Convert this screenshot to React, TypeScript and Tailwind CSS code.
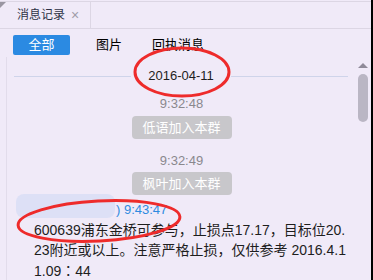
import React from "react";

const font = { fontFamily: '"Liberation Sans", "Noto Sans CJK SC", sans-serif' };

function SystemNote({ time, text, gap }: { time: string; text: string; gap: string }) {
  return (
    <div className="flex flex-col items-center">
      <div className="text-[13px] leading-[16px] text-[#8a888e]">{time}</div>
      <div
        className={`${gap} w-[100px] h-[23px] rounded-[4px] bg-[#c8c7cb] text-white text-[13px] flex items-center justify-center`}
      >
        {text}
      </div>
    </div>
  );
}

export default function App() {
  return (
    <div
      lang="zh-CN"
      className="relative w-[373px] h-[280px] overflow-hidden bg-[#f0eaf8] border-r-2 border-black"
      style={font}
    >
      {/* Tab strip */}
      <div className="mt-[1px] h-[28px] border-t border-b border-[#dcd6e4] flex">
        <div className="relative w-[91px] border-r border-[#dcd6e4] flex items-center pl-[17px] gap-[6px]">
          <svg className="absolute left-0 top-0" width="7" height="7" viewBox="0 0 7 7">
            <path d="M0 0 H6 L0 6 Z" fill="#9a96a2" />
          </svg>
          <span className="text-[12px] text-[#2e3345]">消息记录</span>
          <span className="text-[14px] leading-none text-[#a09ca8]">×</span>
        </div>
      </div>

      {/* Filters */}
      <div className="flex items-center h-[20px] mt-[6px] pl-[13px] text-[13px] text-black">
        <div className="w-[57px] h-[20px] rounded-[2px] bg-[#2b8ae2] text-white flex items-center justify-center">
          全部
        </div>
        <span className="ml-[26px]">图片</span>
        <span className="ml-[30px]">回执消息</span>
      </div>

      <div className="flex">
        {/* Message list */}
        <div className="flex-1 border-l border-[#e2dceb] ml-[6px] mt-[2px]">
          <div className="flex items-center mt-[11px] pl-[7px] pr-[8px]">
            <div className="flex-1 h-px bg-[#cfd4ea]" />
            <span className="px-[17px] text-[13px] leading-[16px] text-[#1e1e1e]">2016-04-11</span>
            <div className="flex-1 h-px bg-[#cfd4ea]" />
          </div>
          <div className="mt-[12px]">
            <SystemNote time="9:32:48" text="低语加入本群" gap="mt-[4px]" />
          </div>
          <div className="mt-[14px]">
            <SystemNote time="9:32:49" text="枫叶加入本群" gap="mt-[3px]" />
          </div>
          <div className="flex items-end -mt-[1px] pl-[9px]">
            <div className="w-[99px] h-[24px] rounded-[8px] bg-[#dde0f6]" />
            <span className="text-[13px] leading-[16px] text-[#2f8ae0] ml-[1px]">) 9:43:47</span>
          </div>
          <div className="pl-[27px] mt-[2px] text-[14px] leading-[20px] text-[#1e1e1e] whitespace-nowrap">
            <div>600639浦东金桥可参与，止损点17.17，目标位20.</div>
            <div>23附近或以上。注意严格止损，仅供参考 2016.4.1</div>
            <div>
              1.09<span className="font-['Noto_Sans_CJK_TC']">：</span>44
            </div>
          </div>
        </div>

        {/* Scrollbar */}
        <div className="w-[15px] flex flex-col items-center pr-[2px] mt-[2px]">
          <svg className="mt-[6px]" width="10" height="5" viewBox="0 0 10 5">
            <path d="M5 0 L10 5 H0 Z" fill="#8f8a99" />
          </svg>
          <div className="mt-[6px] w-[10px] h-[48px] rounded-full bg-[#bab6c4]" />
        </div>
      </div>

      {/* Hand-drawn annotations */}
      <svg className="absolute inset-0 pointer-events-none" width="373" height="280">
        <ellipse cx="182" cy="72" rx="47" ry="24" fill="none" stroke="#ee2b2b" strokeWidth="3" />
        <ellipse
          cx="99"
          cy="221"
          rx="81"
          ry="20"
          fill="none"
          stroke="#ee2b2b"
          strokeWidth="3"
          transform="rotate(-3 99 221)"
        />
      </svg>
    </div>
  );
}
